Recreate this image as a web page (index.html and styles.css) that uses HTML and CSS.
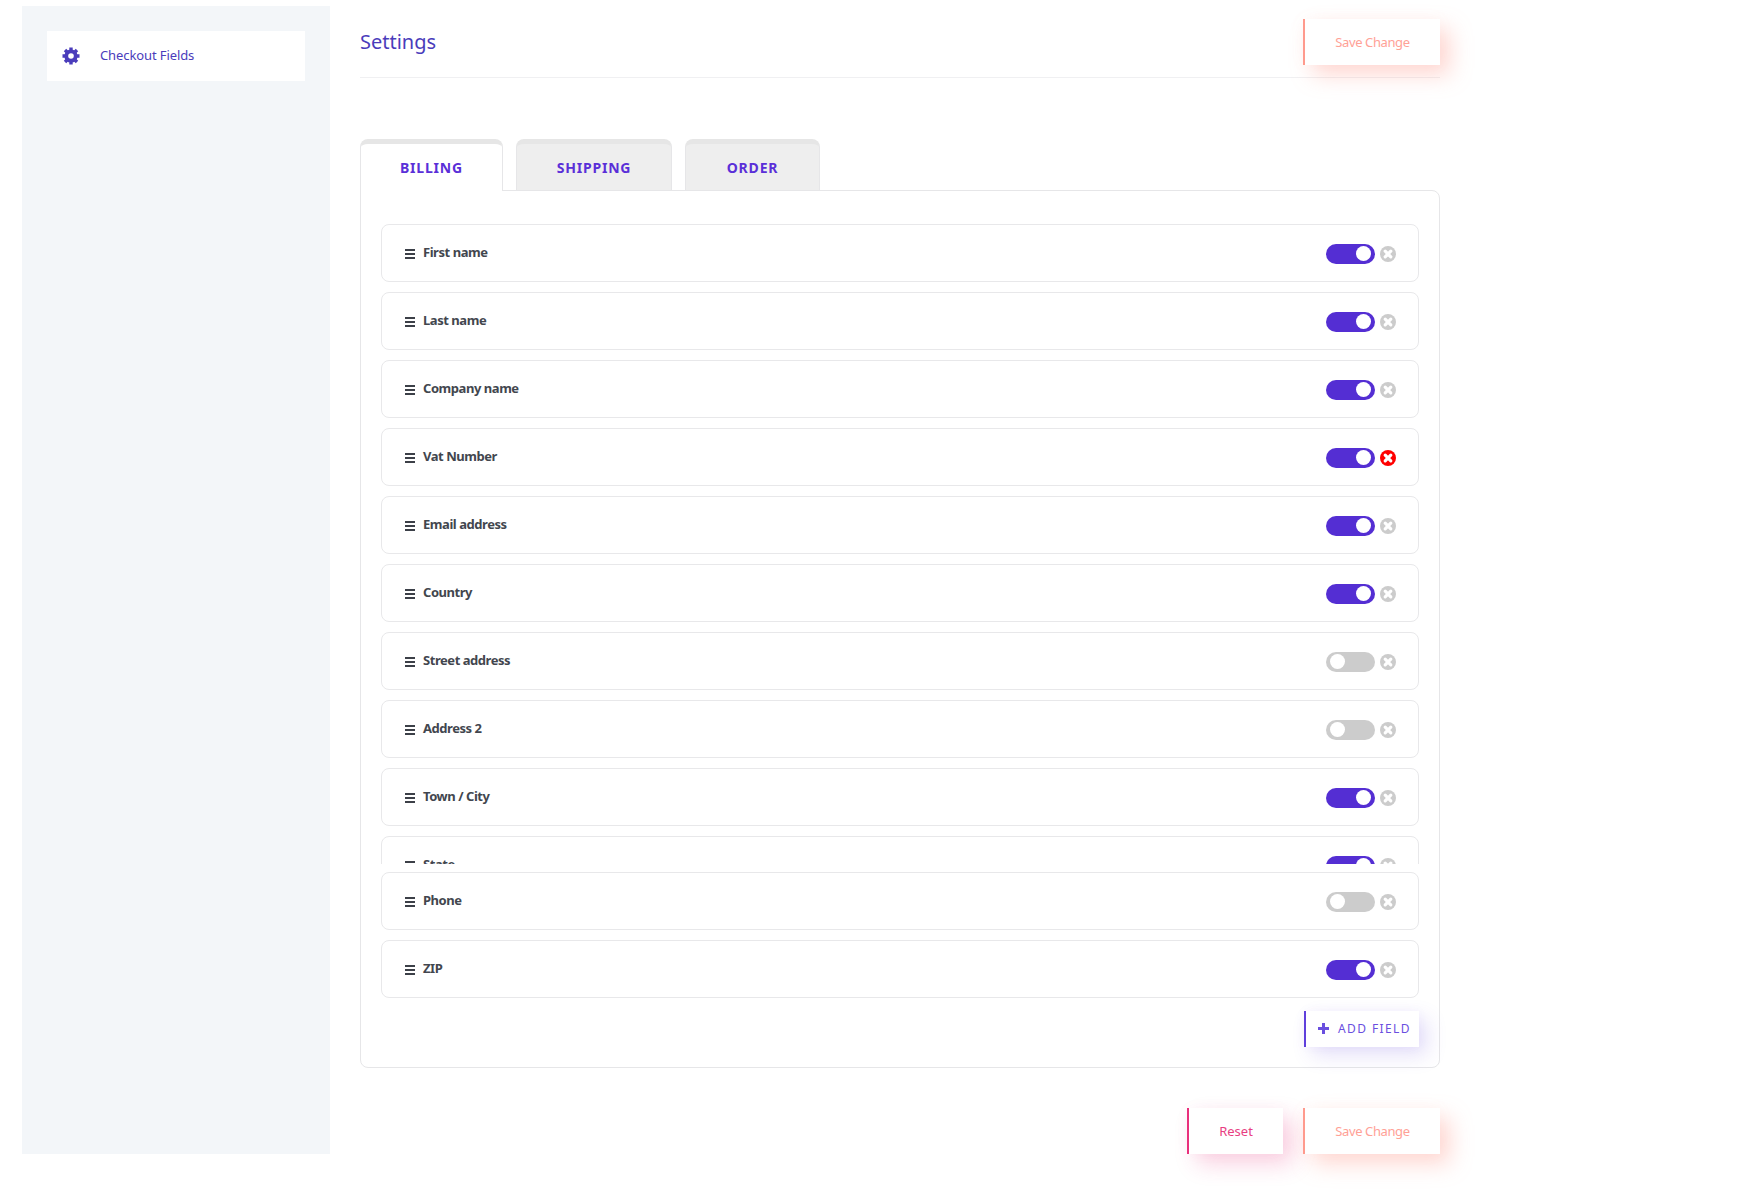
FILE: index.html
```html
<!DOCTYPE html>
<html lang="en">
<head>
  <meta charset="UTF-8">
  <title>Checkout Fields Settings</title>
  <link rel="stylesheet" href="styles.css">
</head>
<body>
  <svg class="icon-defs" width="0" height="0">
    <symbol id="i-close" viewBox="0 0 16 16">
      <circle cx="8" cy="8" r="8" fill="currentColor"/>
      <path d="M5.2 5.2l5.6 5.6M10.8 5.2l-5.6 5.6" stroke="#fff" stroke-width="3.2" stroke-linecap="round" fill="none"/>
    </symbol>
    <symbol id="i-bars" viewBox="0 0 10 10">
      <path d="M0 0h10v2H0zM0 4h10v2H0zM0 8h10v2H0z" fill="currentColor"/>
    </symbol>
  </svg>

  <aside class="sidebar">
    <a class="side-item">
      <svg class="gear" viewBox="0 0 18 18">
        <g stroke="currentColor" stroke-width="3.4">
          <path d="M9 0.5v17M0.5 9h17M3 3l12 12M15 3L3 15"/>
        </g>
        <circle cx="9" cy="9" r="6.6" fill="currentColor"/>
        <circle cx="9" cy="9" r="2.8" fill="#fff"/>
      </svg>
      <span>Checkout Fields</span>
    </a>
  </aside>

  <main class="main">
    <header class="top">
      <h1>Settings</h1>
      <button class="btn btn-save">Save Change</button>
    </header>

    <nav class="tabs">
      <a class="tab tab-billing active">BILLING</a>
      <a class="tab tab-shipping">SHIPPING</a>
      <a class="tab tab-order">ORDER</a>
    </nav>

    <section class="panel">
      <div class="fields-scroll">
        <div class="field"><svg class="bars"><use href="#i-bars"/></svg><span class="name">First name</span><span class="toggle on"></span><svg class="close"><use href="#i-close"/></svg></div>
        <div class="field"><svg class="bars"><use href="#i-bars"/></svg><span class="name">Last name</span><span class="toggle on"></span><svg class="close"><use href="#i-close"/></svg></div>
        <div class="field"><svg class="bars"><use href="#i-bars"/></svg><span class="name">Company name</span><span class="toggle on"></span><svg class="close"><use href="#i-close"/></svg></div>
        <div class="field"><svg class="bars"><use href="#i-bars"/></svg><span class="name">Vat Number</span><span class="toggle on"></span><svg class="close hover"><use href="#i-close"/></svg></div>
        <div class="field"><svg class="bars"><use href="#i-bars"/></svg><span class="name">Email address</span><span class="toggle on"></span><svg class="close"><use href="#i-close"/></svg></div>
        <div class="field"><svg class="bars"><use href="#i-bars"/></svg><span class="name">Country</span><span class="toggle on"></span><svg class="close"><use href="#i-close"/></svg></div>
        <div class="field"><svg class="bars"><use href="#i-bars"/></svg><span class="name">Street address</span><span class="toggle"></span><svg class="close"><use href="#i-close"/></svg></div>
        <div class="field"><svg class="bars"><use href="#i-bars"/></svg><span class="name">Address 2</span><span class="toggle"></span><svg class="close"><use href="#i-close"/></svg></div>
        <div class="field"><svg class="bars"><use href="#i-bars"/></svg><span class="name">Town / City</span><span class="toggle on"></span><svg class="close"><use href="#i-close"/></svg></div>
        <div class="field"><svg class="bars"><use href="#i-bars"/></svg><span class="name">State</span><span class="toggle on"></span><svg class="close"><use href="#i-close"/></svg></div>
      </div>
      <div class="fields-rest">
        <div class="field"><svg class="bars"><use href="#i-bars"/></svg><span class="name">Phone</span><span class="toggle"></span><svg class="close"><use href="#i-close"/></svg></div>
        <div class="field"><svg class="bars"><use href="#i-bars"/></svg><span class="name">ZIP</span><span class="toggle on"></span><svg class="close"><use href="#i-close"/></svg></div>
      </div>
      <div class="panel-foot">
        <button class="btn-add"><span class="plus"></span>ADD FIELD</button>
      </div>
    </section>

    <footer class="bottom">
      <button class="btn btn-reset">Reset</button>
      <button class="btn btn-save">Save Change</button>
    </footer>
  </main>
</body>
</html>
```

FILE: styles.css
```css
* {
  box-sizing: border-box;
}

body {
  margin: 0;
  height: 1192px;
  padding: 6px 0 0 22px;
  display: flex;
  align-items: flex-start;
  background-color: #fff;
  font-family: "Noto Sans", "Open Sans", sans-serif;
  overflow: hidden;
}

.icon-defs {
  position: absolute;
}

.sidebar {
  width: 308px;
  height: 1148px;
  padding: 25px;
  background-color: #f3f6f9;
}

.side-item {
  display: flex;
  align-items: center;
  height: 50px;
  padding-left: 15px;
  background-color: #fff;
  color: #4a3cbb;
  font-size: 13px;
  letter-spacing: -0.1px;
}

.side-item span {
  margin-left: 20px;
  position: relative;
  top: -1px;
}

.gear {
  width: 18px;
  height: 18px;
}

.main {
  width: 1080px;
  margin-left: 30px;
}

.top {
  display: flex;
  justify-content: space-between;
  height: 72px;
  padding-top: 13px;
  border-bottom: 1px solid #f0f0f2;
}

.top h1 {
  margin: 0;
  padding-top: 9px;
  font-size: 20px;
  font-weight: 400;
  color: #4a3cbb;
}

.btn {
  height: 46px;
  border: none;
  border-left: 2px solid;
  background-color: #fff;
  font-family: inherit;
  font-size: 13px;
}

.btn-save {
  width: 137px;
  border-color: #ff9a8d;
  color: #ffa196;
  letter-spacing: -0.4px;
  box-shadow: 10px 10px 22px rgba(255, 150, 135, 0.36), 0 0 16px rgba(255, 150, 135, 0.05);
}

.btn-reset {
  width: 96px;
  border-color: #e92f7c;
  color: #e83e82;
  box-shadow: 10px 10px 22px rgba(233, 47, 124, 0.22), 0 0 16px rgba(233, 47, 124, 0.03);
}

.tabs {
  display: flex;
  gap: 13px;
  margin-top: 61px;
  height: 52px;
  position: relative;
  z-index: 1;
}

.tab {
  display: flex;
  align-items: center;
  justify-content: center;
  height: 51px;
  border: 1px solid #e6e6e8;
  border-top: 5px solid #e6e6e6;
  border-bottom: none;
  border-radius: 8px 8px 0 0;
  background-color: #eee;
  color: #5a2fd8;
  font-size: 14px;
  font-weight: 700;
  letter-spacing: 0.8px;
}

.tab.active {
  height: 52px;
  background-color: #fff;
}

.tab-billing {
  width: 143px;
}

.tab-shipping {
  width: 156px;
}

.tab-order {
  width: 135px;
}

.panel {
  height: 878px;
  margin-top: -1px;
  padding: 33px 20px 0 20px;
  border: 1px solid #e6e6e8;
  border-radius: 0 8px 8px 8px;
}

.fields-scroll {
  height: 640px;
  overflow: hidden;
  display: flex;
  flex-direction: column;
  gap: 10px;
}

.fields-rest {
  display: flex;
  flex-direction: column;
  gap: 10px;
  margin-top: 8px;
}

.field {
  display: flex;
  align-items: center;
  flex-shrink: 0;
  height: 58px;
  padding: 0 22px 0 23px;
  border: 1px solid #e8e8ea;
  border-radius: 8px;
  background-color: #fff;
}

.bars {
  width: 10px;
  height: 10px;
  color: #3c4048;
  margin-top: 1px;
}

.name {
  margin-left: 8px;
  margin-top: -2px;
  color: #42464e;
  font-size: 13px;
  font-weight: 700;
  letter-spacing: -0.45px;
}

.toggle {
  width: 49px;
  height: 20px;
  margin-left: auto;
  margin-top: 1px;
  border-radius: 10px;
  background-color: #ccc;
  display: flex;
  align-items: center;
  padding: 0 4px;
}

.toggle::after {
  content: "";
  width: 15px;
  height: 15px;
  border-radius: 50%;
  background-color: #fff;
}

.toggle.on {
  background-color: #542ed3;
  justify-content: flex-end;
}

.close {
  width: 16px;
  height: 16px;
  margin-left: 5px;
  margin-top: 1px;
  color: #ccc;
}

.close.hover {
  color: #f00;
}

.panel-foot {
  display: flex;
  justify-content: flex-end;
  margin-top: 13px;
}

.btn-add {
  display: flex;
  align-items: center;
  width: 115px;
  height: 36px;
  padding: 0 0 1px 12px;
  border: none;
  border-left: 2px solid #5f3fdc;
  background-color: #fff;
  color: #6a4fdf;
  font-family: inherit;
  font-size: 12px;
  letter-spacing: 1.4px;
  box-shadow: 8px 8px 20px rgba(95, 63, 220, 0.17), 0 0 12px rgba(95, 63, 220, 0.04);
}

.plus {
  width: 11px;
  height: 11px;
  margin-right: 9px;
  background: linear-gradient(#6a4fdf, #6a4fdf) center / 11px 3px no-repeat,
    linear-gradient(#6a4fdf, #6a4fdf) center / 3px 11px no-repeat;
}

.bottom {
  display: flex;
  justify-content: flex-end;
  gap: 20px;
  margin-top: 40px;
}
```
